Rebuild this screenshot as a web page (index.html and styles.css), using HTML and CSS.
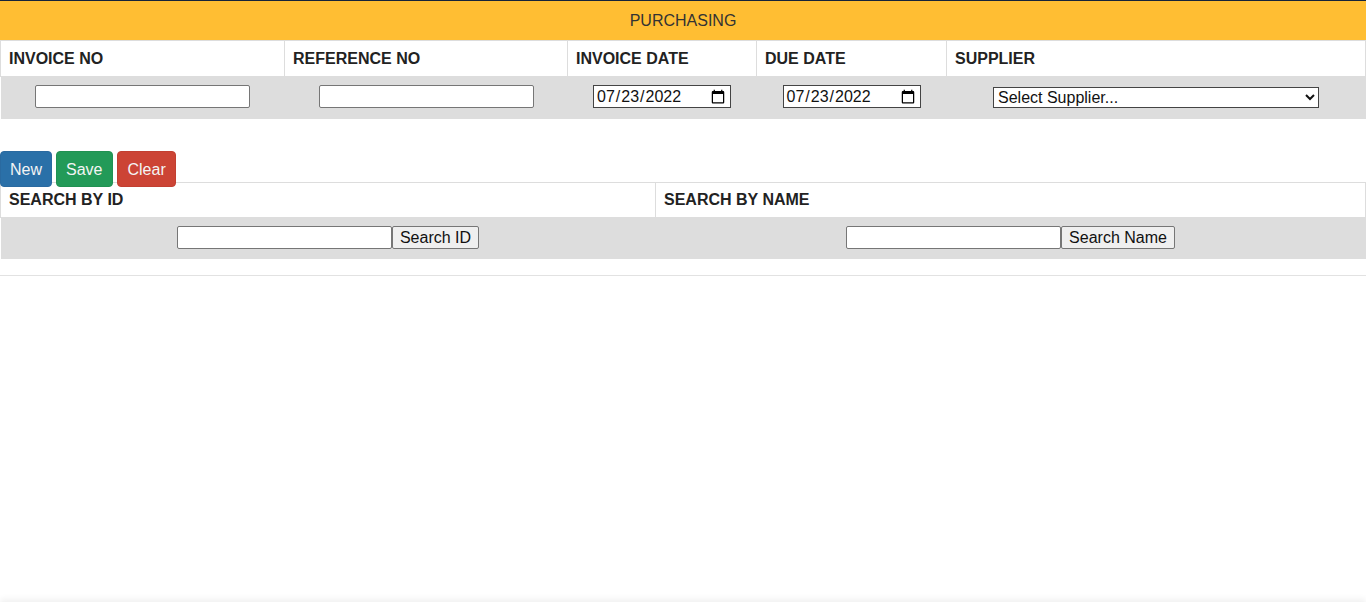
FILE: index.html
```html
<!DOCTYPE html>
<html>
<head>
<meta charset="utf-8">
<title>Purchasing</title>
<link rel="stylesheet" href="styles.css">
</head>
<body>
<div class="page">
  <div class="title-bar">PURCHASING</div>
  <table class="grid">
    <colgroup>
      <col class="c-inv"><col class="c-ref"><col class="c-date"><col class="c-due"><col class="c-sup">
    </colgroup>
    <thead>
      <tr>
        <th>INVOICE NO</th>
        <th>REFERENCE NO</th>
        <th>INVOICE DATE</th>
        <th>DUE DATE</th>
        <th>SUPPLIER</th>
      </tr>
    </thead>
    <tbody>
      <tr>
        <td><input class="txt" type="text"></td>
        <td><input class="txt" type="text"></td>
        <td><input class="date" type="date" value="2022-07-23"></td>
        <td><input class="date" type="date" value="2022-07-23"></td>
        <td><select class="sel"><option>Select Supplier...</option></select></td>
      </tr>
    </tbody>
  </table>

  <div class="actions">
    <button class="btn btn-blue">New</button>
    <button class="btn btn-green">Save</button>
    <button class="btn btn-red">Clear</button>
  </div>

  <table class="grid search">
    <colgroup>
      <col class="c-id"><col class="c-name">
    </colgroup>
    <thead>
      <tr>
        <th>SEARCH BY ID</th>
        <th>SEARCH BY NAME</th>
      </tr>
    </thead>
    <tbody>
      <tr>
        <td><span class="combo"><input class="txt" type="text"><button class="plain">Search ID</button></span></td>
        <td><span class="combo"><input class="txt" type="text"><button class="plain">Search Name</button></span></td>
      </tr>
    </tbody>
  </table>

  <div class="rule"></div>
</div>
<div class="footer"></div>
</body>
</html>
```

FILE: styles.css
```css
html, body {
  margin: 0;
  padding: 0;
  background: #fff;
}
body {
  font-family: "Liberation Sans", Arial, sans-serif;
  font-size: 16px;
  color: #222;
}
.page {
  min-height: 602px;
}
.title-bar {
  border-top: 1px solid #16243a;
  height: 39px;
  line-height: 39px;
  background: #ffbe33;
  text-align: center;
  font-family: "Liberation Sans", Arial, sans-serif;
  font-size: 16px;
  color: #333;
}
.grid {
  width: 100%;
  border-collapse: collapse;
  table-layout: fixed;
}
.grid th {
  text-align: left;
  font-weight: bold;
  font-size: 16px;
  color: #222;
  padding: 9px 8px 8px;
  line-height: 18px;
  border: 1px solid #ddd;
  background: #fff;
}
.grid td {
  background: #ddd;
  text-align: center;
  padding: 8px 8px 11px;
  line-height: 23px;
  font-size: 0;
}
.search th {
  padding: 8px 8px 8px;
}
.search td {
  padding: 8px 8px 10px;
}
.c-inv { width: 284px; }
.c-ref { width: 283px; }
.c-date { width: 189px; }
.c-due { width: 190px; }
.c-sup { width: auto; }
.c-id { width: 655px; }
.c-name { width: auto; }

.txt {
  box-sizing: border-box;
  width: 215px;
  height: 23px;
  border: 1px solid #767676;
  border-radius: 2px;
  background: #fff;
  padding: 1px 2px;
  font-family: "Liberation Sans", Arial, sans-serif;
  font-size: 16px;
  vertical-align: top;
  margin: 0;
}
.date {
  box-sizing: border-box;
  width: 138px;
  height: 23px;
  border: 1px solid #444;
  border-radius: 0;
  background: #fff;
  padding: 0 2px;
  font-family: "Liberation Sans", Arial, sans-serif;
  font-size: 16px;
  color: #111;
  vertical-align: top;
  margin: 0;
}
.sel {
  box-sizing: border-box;
  width: 326px;
  height: 21px;
  margin-top: 2px;
  border: 1px solid #444;
  border-radius: 0;
  background: #fff;
  font-family: "Liberation Sans", Arial, sans-serif;
  font-size: 16px;
  color: #111;
  vertical-align: top;
}
.actions {
  margin-top: 32px;
  margin-bottom: -5px;
  position: relative;
  z-index: 1;
  display: flex;
  gap: 4px;
}
.btn {
  font-family: "Liberation Sans", Arial, sans-serif;
  font-size: 16px;
  line-height: 22px;
  padding: 7px 9px 5px;
  border: 1px solid transparent;
  border-radius: 4px;
  color: #f4f4f4;
  cursor: pointer;
  margin: 0;
}
.btn-green { padding-right: 10px; }
.btn-blue { background: #2a70a8; border-color: #2a6aa0; }
.btn-green { background: #239a58; border-color: #219152; }
.btn-red { background: #cc4435; border-color: #c23f31; }

.combo {
  display: inline-flex;
  vertical-align: top;
}
.plain {
  box-sizing: border-box;
  height: 23px;
  margin: 0;
  padding: 0 7px;
  border: 1px solid #767676;
  border-radius: 2px;
  background: #efefef;
  font-family: "Liberation Sans", Arial, sans-serif;
  font-size: 16px;
  color: #111;
  line-height: 21px;
}
.rule {
  margin-top: 16px;
  border-top: 1px solid #e2e2e2;
}
.footer {
  height: 20px;
  box-shadow: 0 -3px 6px rgba(0, 0, 0, 0.06);
}
```
